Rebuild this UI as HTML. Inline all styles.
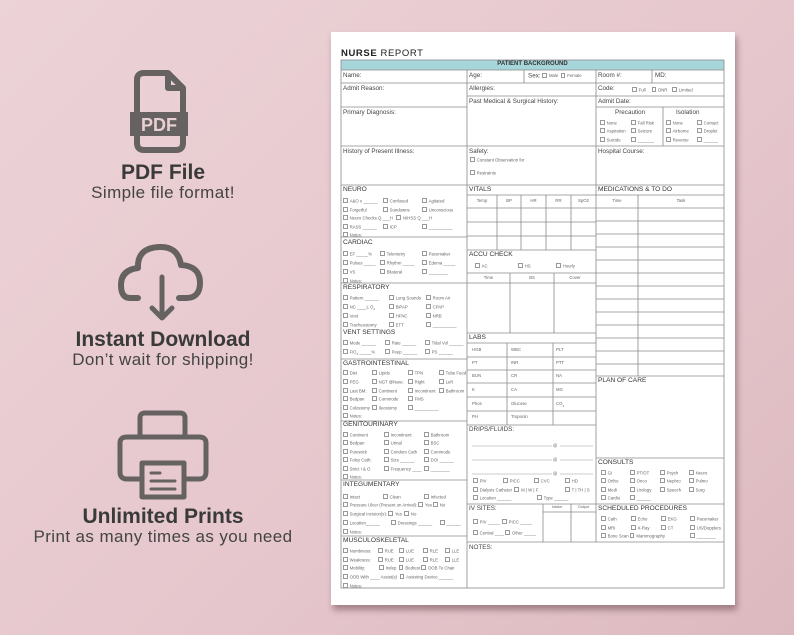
<!DOCTYPE html>
<html><head><meta charset="utf-8">
<style>
html,body{margin:0;padding:0}
body{width:794px;height:635px;overflow:hidden;background:linear-gradient(135deg,#ecd3d7 0%,#e5c6cc 60%,#dcb9bf 100%);position:relative;font-family:"Liberation Sans",sans-serif}
.paper{position:absolute;left:331px;top:32px;width:404px;height:573px;background:#fff;box-shadow:2px 5px 6px rgba(80,50,55,.45)}
.t{position:absolute;font-size:4.3px;color:#666;line-height:1;white-space:nowrap}
.l{position:absolute;font-size:6.3px;color:#444;line-height:1;white-space:nowrap}
.h{position:absolute;font-size:6.6px;color:#333;line-height:1;white-space:nowrap}
.t i{display:inline-block;width:2.6px;height:2.6px;border:0.5px solid #999;margin-right:2px;vertical-align:-0.3px}
.big{position:absolute;left:0;width:326px;text-align:center;color:#3a3a3a;line-height:1;white-space:nowrap}
.b1{font-weight:bold;font-size:21px}
.b2{font-size:17px;color:#444;letter-spacing:0.4px}
</style></head><body>

<svg width="794" height="635" style="position:absolute;left:0;top:0">
<g fill="none" stroke="#676262" stroke-width="6" stroke-linejoin="round" stroke-linecap="round">
<path d="M168 73 H144 Q137 73 137 80 V143 Q137 150 144 150 H176 Q183 150 183 143 V88 Z M168 73 V88 H183"/>
<path d="M138 298 H130 Q121 298 121 285 Q121 270 138 268 Q137 248 159 247 Q178 246 181 265 Q200 266 200 283 Q200 298 186 298 H179"/>
<path d="M162 277 V318 M152 308 L162 318 L172 308" stroke-width="5"/>
<path d="M140 436 V418 Q140 413 145 413 H180 Q185 413 185 418 V436" stroke-width="5"/>
<path d="M140 479 H127 Q120 479 120 472 V443 Q120 437 127 437 H199 Q206 437 206 443 V472 Q206 479 199 479 H186" stroke-width="5"/>
<path d="M142 463 H184 V497 H142 Z" stroke-width="5"/>
</g>
<rect x="130" y="112" width="58" height="24" fill="#676262"/>
<text x="159" y="131" text-anchor="middle" font-family="Liberation Sans" font-weight="bold" font-size="18" fill="#ead0d4">PDF</text>
<g stroke="#676262" stroke-width="3" stroke-linecap="round"><path d="M151 473 H160 M151 481 H175 M151 489 H175"/></g>
</svg>

<div class="big b1" style="top:162px">PDF File</div>
<div class="big b2" style="top:184px">Simple file format!</div>
<div class="big b1" style="top:329px">Instant Download</div>
<div class="big b2" style="top:351px">Don’t wait for shipping!</div>
<div class="big b1" style="top:506px">Unlimited Prints</div>
<div class="big b2" style="top:528px">Print as many times as you need</div>

<div class="paper"></div>
<div style="position:absolute;left:341px;top:49px;font-size:9.5px;color:#222;letter-spacing:0.6px;line-height:1"><b style="font-weight:bold">NURSE</b> REPORT</div>

<svg width="794" height="635" style="position:absolute;left:0;top:0">
<rect x="341" y="60" width="383" height="10" fill="#a7d6da"/>
<g stroke="#8a8a8a" stroke-width="0.8" fill="none">
<rect x="341" y="60" width="383" height="528"/>
<path d="M341 70H724M341 83H724M467 96H724M341 107H467M596 107H724M341 146H724M341 185H724M467 195H724M467 208H724M467 222H596M467 236H596M467 250H596M467 273H596M467 283H596M467 333H596M467 343H596M467 357H596M467 370H596M467 383H596M467 397H596M467 411H596M467 425H596M467 504H724M596 376H724M596 458H724M467 542H724M341 237H467M341 283H467M341 359H467M341 421H467M341 480H467M341 536H467M543 512H596"/>
<path d="M596 221H724M596 234H724M596 247H724M596 260H724M596 273H724M596 286H724M596 299H724M596 312H724M596 325H724M596 338H724M596 351H724M596 364H724"/>
<path d="M467 70V588M596 70V542M524 70V83M652 70V83M663 107V146M497 195V250M521 195V250M546 195V250M571 195V250M510 273V333M554 273V333M507 343V425M553 343V425M543 504V542M571 504V542M638 195V376"/>
</g>
<g stroke="#999" stroke-width="0.5"><path d="M472 446H552M560 446H593M472 460H552M560 460H593M472 474H552M560 474H593"/></g>
</svg>

<div class="h" style="left:341px;width:383px;text-align:center;top:61px;font-size:6px;font-weight:bold;color:#333">PATIENT BACKGROUND</div>
<div class="l" style="left:343px;top:73px">Name:</div>
<div class="l" style="left:469px;top:73px">Age:</div>
<div class="l" style="left:528px;top:73px">Sex: <span class="t" style="position:static"><i></i>Male &nbsp;<i></i>Female</span></div>
<div class="l" style="left:598px;top:73px">Room #:</div>
<div class="l" style="left:655px;top:73px">MD:</div>
<div class="l" style="left:343px;top:86px">Admit Reason:</div>
<div class="l" style="left:469px;top:86px">Allergies:</div>
<div class="l" style="left:598px;top:86px">Code:</div>
<div class="t" style="left:632px;top:87px"><i></i>Full &nbsp;&nbsp;&nbsp;&nbsp;<i></i>DNR &nbsp;&nbsp;&nbsp;<i></i>Limited</div>
<div class="l" style="left:469px;top:99px">Past Medical &amp; Surgical History:</div>
<div class="l" style="left:598px;top:99px">Admit Date:</div>
<div class="l" style="left:343px;top:110px">Primary Diagnosis:</div>
<div class="l" style="left:615px;top:110px">Precaution</div>
<div class="l" style="left:676px;top:110px">Isolation</div>
<div class="t" style="left:600px;top:120px"><i></i>None</div><div class="t" style="left:631px;top:120px"><i></i>Fall Risk</div>
<div class="t" style="left:600px;top:128px"><i></i>Aspiration</div><div class="t" style="left:631px;top:128px"><i></i>Seizure</div>
<div class="t" style="left:600px;top:137px"><i></i>Suicide</div><div class="t" style="left:631px;top:137px"><i></i>_______</div>
<div class="t" style="left:666px;top:120px"><i></i>None</div><div class="t" style="left:697px;top:120px"><i></i>Contact</div>
<div class="t" style="left:666px;top:128px"><i></i>Airborne</div><div class="t" style="left:697px;top:128px"><i></i>Droplet</div>
<div class="t" style="left:666px;top:137px"><i></i>Reverse</div><div class="t" style="left:697px;top:137px"><i></i>______</div>
<div class="l" style="left:343px;top:149px">History of Present Illness:</div>
<div class="l" style="left:469px;top:149px">Safety:</div>
<div class="t" style="left:470px;top:157px"><i></i>Constant Observation for</div>
<div class="t" style="left:470px;top:170px"><i></i>Restraints</div>
<div class="l" style="left:598px;top:149px">Hospital Course:</div>

<div class="h" style="left:343px;top:187px">NEURO</div>
<div class="t" style="left:343px;top:198px"><i></i>A&amp;O x ______</div><div class="t" style="left:383px;top:198px"><i></i>Confused</div><div class="t" style="left:422px;top:198px"><i></i>Agitated</div>
<div class="t" style="left:343px;top:207px"><i></i>Forgetful</div><div class="t" style="left:383px;top:207px"><i></i>Sundowns</div><div class="t" style="left:422px;top:207px"><i></i>Unconscious</div>
<div class="t" style="left:343px;top:215px"><i></i>Neuro Checks Q ___H &nbsp;&nbsp;<i></i>NIHSS Q ___H</div>
<div class="t" style="left:343px;top:224px"><i></i>RASS ______</div><div class="t" style="left:383px;top:224px"><i></i>ICP</div><div class="t" style="left:422px;top:224px"><i></i>__________</div>
<div class="t" style="left:343px;top:232px"><i></i>Notes:</div>
<div class="h" style="left:343px;top:240px">CARDIAC</div>
<div class="t" style="left:343px;top:251px"><i></i>EF _____%</div><div class="t" style="left:380px;top:251px"><i></i>Telemetry</div><div class="t" style="left:422px;top:251px"><i></i>Pacemaker</div>
<div class="t" style="left:343px;top:260px"><i></i>Pulses _____</div><div class="t" style="left:380px;top:260px"><i></i>Rhythm _____</div><div class="t" style="left:422px;top:260px"><i></i>Edema _____</div>
<div class="t" style="left:343px;top:269px"><i></i>VS</div><div class="t" style="left:380px;top:269px"><i></i>Bilateral</div><div class="t" style="left:422px;top:269px"><i></i>________</div>
<div class="t" style="left:343px;top:278px"><i></i>Notes:</div>
<div class="h" style="left:343px;top:285px">RESPIRATORY</div>
<div class="t" style="left:343px;top:295px"><i></i>Pattern ______</div><div class="t" style="left:389px;top:295px"><i></i>Lung Sounds</div><div class="t" style="left:426px;top:295px"><i></i>Room Air</div>
<div class="t" style="left:343px;top:304px"><i></i>NC ____L O<sub style="font-size:3px">2</sub></div><div class="t" style="left:389px;top:304px"><i></i>BiPAP</div><div class="t" style="left:426px;top:304px"><i></i>CPAP</div>
<div class="t" style="left:343px;top:313px"><i></i>Vent</div><div class="t" style="left:389px;top:313px"><i></i>HFNC</div><div class="t" style="left:426px;top:313px"><i></i>NRB</div>
<div class="t" style="left:343px;top:322px"><i></i>Tracheostomy</div><div class="t" style="left:389px;top:322px"><i></i>ETT</div><div class="t" style="left:426px;top:322px"><i></i>__________</div>
<div class="h" style="left:343px;top:330px">VENT SETTINGS</div>
<div class="t" style="left:343px;top:340px"><i></i>Mode ______</div><div class="t" style="left:385px;top:340px"><i></i>Rate ______</div><div class="t" style="left:425px;top:340px"><i></i>Tidal Vol ______</div>
<div class="t" style="left:343px;top:349px"><i></i>FiO<sub style="font-size:3px">2</sub> _____%</div><div class="t" style="left:385px;top:349px"><i></i>Peep ______</div><div class="t" style="left:425px;top:349px"><i></i>PS ______</div>
<div class="h" style="left:343px;top:361px">GASTROINTESTINAL</div>
<div class="t" style="left:343px;top:370px"><i></i>Diet</div><div class="t" style="left:372px;top:370px"><i></i>Lipids</div><div class="t" style="left:408px;top:370px"><i></i>TPN</div><div class="t" style="left:439px;top:370px"><i></i>Tube Feed</div>
<div class="t" style="left:343px;top:379px"><i></i>PEG</div><div class="t" style="left:372px;top:379px"><i></i>NGT @Nare:</div><div class="t" style="left:408px;top:379px"><i></i>Right</div><div class="t" style="left:439px;top:379px"><i></i>Left</div>
<div class="t" style="left:343px;top:388px"><i></i>Last BM:</div><div class="t" style="left:372px;top:388px"><i></i>Continent</div><div class="t" style="left:408px;top:388px"><i></i>Incontinent</div><div class="t" style="left:439px;top:388px"><i></i>Bathroom</div>
<div class="t" style="left:343px;top:396px"><i></i>Bedpan</div><div class="t" style="left:372px;top:396px"><i></i>Commode</div><div class="t" style="left:408px;top:396px"><i></i>FMS</div>
<div class="t" style="left:343px;top:405px"><i></i>Colostomy</div><div class="t" style="left:372px;top:405px"><i></i>Ileostomy</div><div class="t" style="left:408px;top:405px"><i></i>__________</div>
<div class="t" style="left:343px;top:413px"><i></i>Notes:</div>
<div class="h" style="left:343px;top:422px">GENITOURINARY</div>
<div class="t" style="left:343px;top:432px"><i></i>Continent</div><div class="t" style="left:384px;top:432px"><i></i>Incontinent</div><div class="t" style="left:424px;top:432px"><i></i>Bathroom</div>
<div class="t" style="left:343px;top:440px"><i></i>Bedpan</div><div class="t" style="left:384px;top:440px"><i></i>Urinal</div><div class="t" style="left:424px;top:440px"><i></i>BSC</div>
<div class="t" style="left:343px;top:449px"><i></i>Purewick</div><div class="t" style="left:384px;top:449px"><i></i>Condom Cath</div><div class="t" style="left:424px;top:449px"><i></i>Commode</div>
<div class="t" style="left:343px;top:457px"><i></i>Foley Cath:</div><div class="t" style="left:384px;top:457px"><i></i>Size ______</div><div class="t" style="left:424px;top:457px"><i></i>DOI ______</div>
<div class="t" style="left:343px;top:466px"><i></i>Strict I &amp; O</div><div class="t" style="left:384px;top:466px"><i></i>Frequency ____</div><div class="t" style="left:424px;top:466px"><i></i>________</div>
<div class="t" style="left:343px;top:474px"><i></i>Notes:</div>
<div class="h" style="left:343px;top:482px">INTEGUMENTARY</div>
<div class="t" style="left:343px;top:494px"><i></i>Intact</div><div class="t" style="left:383px;top:494px"><i></i>Clean</div><div class="t" style="left:424px;top:494px"><i></i>Infected</div>
<div class="t" style="left:343px;top:502px"><i></i>Pressure Ulcer (Present on Arrival): <i></i>Yes <i></i>No</div>
<div class="t" style="left:343px;top:511px"><i></i>Surgical Incision(s): <i></i>Yes &nbsp;<i></i>No</div>
<div class="t" style="left:343px;top:520px"><i></i>Location______</div><div class="t" style="left:391px;top:520px"><i></i>Dressings ______</div><div class="t" style="left:440px;top:520px"><i></i>______</div>
<div class="t" style="left:343px;top:529px"><i></i>Notes:</div>
<div class="h" style="left:343px;top:538px">MUSCULOSKELETAL</div>
<div class="t" style="left:343px;top:548px"><i></i>Numbness:</div><div class="t" style="left:378px;top:548px"><i></i>RUE</div><div class="t" style="left:399px;top:548px"><i></i>LUE</div><div class="t" style="left:423px;top:548px"><i></i>RLE</div><div class="t" style="left:445px;top:548px"><i></i>LLE</div>
<div class="t" style="left:343px;top:557px"><i></i>Weakness:</div><div class="t" style="left:378px;top:557px"><i></i>RUE</div><div class="t" style="left:399px;top:557px"><i></i>LUE</div><div class="t" style="left:423px;top:557px"><i></i>RLE</div><div class="t" style="left:445px;top:557px"><i></i>LLE</div>
<div class="t" style="left:343px;top:565px"><i></i>Mobility:</div><div class="t" style="left:379px;top:565px"><i></i>Indep &nbsp;<i></i>Bedrest <i></i>OOB To Chair</div>
<div class="t" style="left:343px;top:574px"><i></i>OOB With ____ Assist(s) &nbsp;<i></i>Assisting Device ______</div>
<div class="t" style="left:343px;top:583px"><i></i>Notes:</div>

<div class="h" style="left:469px;top:187px">VITALS</div>
<div class="t" style="left:467px;width:30px;text-align:center;top:199px">Temp</div>
<div class="t" style="left:497px;width:24px;text-align:center;top:199px">BP</div>
<div class="t" style="left:521px;width:25px;text-align:center;top:199px">HR</div>
<div class="t" style="left:546px;width:25px;text-align:center;top:199px">RR</div>
<div class="t" style="left:571px;width:25px;text-align:center;top:199px">SpO2</div>
<div class="h" style="left:469px;top:252px">ACCU CHECK</div>
<div class="t" style="left:475px;top:263px"><i></i>AC</div><div class="t" style="left:518px;top:263px"><i></i>HS</div><div class="t" style="left:556px;top:263px"><i></i>Hourly</div>
<div class="t" style="left:467px;width:43px;text-align:center;top:276px">Time</div>
<div class="t" style="left:510px;width:44px;text-align:center;top:276px">BS</div>
<div class="t" style="left:554px;width:42px;text-align:center;top:276px">Cover</div>
<div class="h" style="left:469px;top:335px">LABS</div>
<div class="t" style="left:472px;top:348px">HGB</div><div class="t" style="left:511px;top:348px">WBC</div><div class="t" style="left:556px;top:348px">PLT</div>
<div class="t" style="left:472px;top:361px">PT</div><div class="t" style="left:511px;top:361px">INR</div><div class="t" style="left:556px;top:361px">PTT</div>
<div class="t" style="left:472px;top:374px">BUN</div><div class="t" style="left:511px;top:374px">CR</div><div class="t" style="left:556px;top:374px">NA</div>
<div class="t" style="left:472px;top:388px">K</div><div class="t" style="left:511px;top:388px">CA</div><div class="t" style="left:556px;top:388px">MG</div>
<div class="t" style="left:472px;top:402px">Phos</div><div class="t" style="left:511px;top:402px">Glucose</div><div class="t" style="left:556px;top:402px">CO<sub style="font-size:3px">2</sub></div>
<div class="t" style="left:472px;top:415px">PH</div><div class="t" style="left:511px;top:415px">Troponin</div>
<div class="l" style="left:469px;top:427px">DRIPS/FLUIDS:</div>
<div class="t" style="left:553px;top:444px">@</div><div class="t" style="left:553px;top:458px">@</div><div class="t" style="left:553px;top:472px">@</div>
<div class="t" style="left:473px;top:478px"><i></i>PIV</div><div class="t" style="left:503px;top:478px"><i></i>PICC</div><div class="t" style="left:534px;top:478px"><i></i>CVC</div><div class="t" style="left:565px;top:478px"><i></i>HD</div>
<div class="t" style="left:473px;top:487px"><i></i>Dialysis Catheter &nbsp;<i></i>M | W | F</div><div class="t" style="left:565px;top:487px"><i></i>T | TH | S</div>
<div class="t" style="left:473px;top:495px"><i></i>Location ______</div><div class="t" style="left:537px;top:495px"><i></i>Type ______</div>
<div class="l" style="left:469px;top:506px">IV SITES:</div>
<div class="t" style="left:543px;width:28px;text-align:center;top:506px;font-size:3.8px">Intake</div>
<div class="t" style="left:571px;width:25px;text-align:center;top:506px;font-size:3.8px">Output</div>
<div class="t" style="left:473px;top:519px"><i></i>PIV _____ &nbsp;<i></i>PICC _____</div>
<div class="t" style="left:473px;top:530px"><i></i>Central ____ <i></i>Other _____</div>
<div class="l" style="left:469px;top:545px">NOTES:</div>

<div class="h" style="left:598px;top:187px">MEDICATIONS &amp; TO DO</div>
<div class="t" style="left:596px;width:42px;text-align:center;top:199px">Time</div>
<div class="t" style="left:638px;width:86px;text-align:center;top:199px">Task</div>
<div class="h" style="left:598px;top:378px">PLAN OF CARE</div>
<div class="h" style="left:598px;top:460px">CONSULTS</div>
<div class="t" style="left:601px;top:470px"><i></i>GI</div><div class="t" style="left:630px;top:470px"><i></i>PT/OT</div><div class="t" style="left:660px;top:470px"><i></i>Psych</div><div class="t" style="left:689px;top:470px"><i></i>Neuro</div>
<div class="t" style="left:601px;top:478px"><i></i>Ortho</div><div class="t" style="left:630px;top:478px"><i></i>Onco</div><div class="t" style="left:660px;top:478px"><i></i>Nephro</div><div class="t" style="left:689px;top:478px"><i></i>Pulmo</div>
<div class="t" style="left:601px;top:487px"><i></i>Medi</div><div class="t" style="left:630px;top:487px"><i></i>Urology</div><div class="t" style="left:660px;top:487px"><i></i>Speech</div><div class="t" style="left:689px;top:487px"><i></i>Surg</div>
<div class="t" style="left:601px;top:495px"><i></i>Cardio</div><div class="t" style="left:630px;top:495px"><i></i>______</div>
<div class="h" style="left:598px;top:506px">SCHEDULED PROCEDURES</div>
<div class="t" style="left:601px;top:516px"><i></i>Cath</div><div class="t" style="left:631px;top:516px"><i></i>Echo</div><div class="t" style="left:661px;top:516px"><i></i>EKG</div><div class="t" style="left:690px;top:516px"><i></i>Pacemaker</div>
<div class="t" style="left:601px;top:525px"><i></i>MRI</div><div class="t" style="left:631px;top:525px"><i></i>X-Ray</div><div class="t" style="left:661px;top:525px"><i></i>CT</div><div class="t" style="left:690px;top:525px"><i></i>US/Dopplers</div>
<div class="t" style="left:601px;top:533px"><i></i>Bone Scan <i></i>Mammography</div><div class="t" style="left:690px;top:533px"><i></i>________</div>
</body></html>
